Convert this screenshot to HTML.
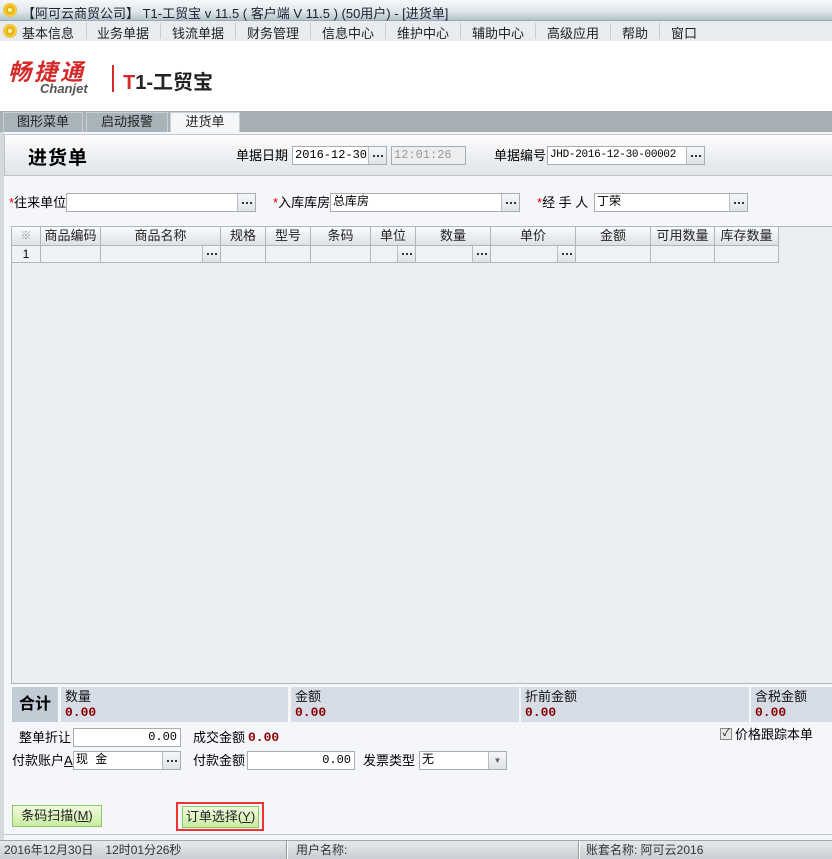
<!DOCTYPE html>
<html><head><meta charset="utf-8">
<style>
*{margin:0;padding:0;box-sizing:border-box}
body{width:832px;height:859px;position:relative;overflow:hidden;background:#f4f6f9;font-family:"Liberation Sans","WenQuanYi Zen Hei","Noto Sans CJK SC",sans-serif;font-size:12px;color:#000}
.a{position:absolute}
.title{left:0;top:0;width:832px;height:21px;background:linear-gradient(#f6f9fa,#dde6ea 60%,#b3c3ca);border-bottom:1px solid #98aab4}
.coin{width:14px;height:14px;border-radius:50%;background:radial-gradient(circle,#fff3a0 20%,#e0a800 25%,#f7d04a 60%,#b88000);}
.menu{left:0;top:21px;width:832px;height:20px;background:#e8ebf0}
.mi{position:absolute;top:2px;font-size:13px;color:#222}
.sep{position:absolute;top:2px;width:1px;height:16px;background:#c8cdd3}
.tabbar{left:0;top:111px;width:832px;height:21px;background:#a8b0b6}
.tab{position:absolute;top:1px;height:20px;background:#a9b3ba;border:1px solid #c8d0d5;border-bottom:none;font-size:13px;color:#222;text-align:center;line-height:18px}
.inp{position:absolute;height:19px;background:#fff;border:1px solid #a8adb3;font-size:12px;line-height:17px;padding-left:2px;font-family:"Liberation Mono","WenQuanYi Zen Hei",monospace;overflow:hidden;white-space:nowrap}
.btn3{position:absolute;width:18px;height:17px;background:linear-gradient(#f5f6f8,#dfe3e8);border-left:1px solid #b8bdc3;display:flex;justify-content:center;align-items:center;gap:2px}
.btn3 b{display:block;width:2px;height:2px;background:#333}
.lbl{position:absolute;font-size:13px;line-height:15px}
.red{color:#e00}
.grid{left:11px;top:226px;width:821px;height:458px;background:#ebeff3;border:1px solid #b0b5ba;border-right:none}
.gh{position:absolute;top:0;height:19px;background:linear-gradient(#fafbfc,#dde1e6);border-right:1px solid #b0b5ba;border-bottom:1px solid #b0b5ba;text-align:center;font-size:13px;line-height:18px;color:#222}
.gc{position:absolute;top:19px;height:17px;background:#eef2f7;border-right:1px solid #b0b5ba;border-bottom:1px solid #b0b5ba}
.gc .btn3{height:16px}
.sum{position:absolute;top:687px;height:35px;background:#d6dde6}
.st{font-size:13px;padding:2px 4px 0;line-height:16px;color:#111}
.sv{font-family:"Liberation Mono",monospace;font-weight:bold;color:#8b0000;font-size:13px;padding-left:4px;line-height:14px;margin-top:1px}
.gbtn{position:absolute;height:22px;background:linear-gradient(#f0fae0,#c8eba0);border:1px solid #8cc760;font-size:13px;line-height:20px;text-align:center;color:#222}
.status{left:0;top:840px;width:832px;height:19px;background:linear-gradient(#e6e9ec,#c9ced3);border-top:1px solid #a0a6ac;font-size:12px;color:#333;line-height:18px}
</style></head><body>
<div class="a title">
 <div class="a coin" style="left:3px;top:3px"></div>
 <div class="a" style="left:22px;top:3px;font-size:13px;color:#223">【阿可云商贸公司】 T1-工贸宝 v 11.5 ( 客户端 V 11.5 )  (50用户) - [进货单]</div>
</div>
<div class="a menu">
 <div class="a coin" style="left:3px;top:3px"></div>
 <span class="mi" style="left:22px">基本信息</span><i class="sep" style="left:86px"></i>
 <span class="mi" style="left:97px">业务单据</span><i class="sep" style="left:160px"></i>
 <span class="mi" style="left:172px">钱流单据</span><i class="sep" style="left:235px"></i>
 <span class="mi" style="left:247px">财务管理</span><i class="sep" style="left:310px"></i>
 <span class="mi" style="left:322px">信息中心</span><i class="sep" style="left:385px"></i>
 <span class="mi" style="left:397px">维护中心</span><i class="sep" style="left:460px"></i>
 <span class="mi" style="left:472px">辅助中心</span><i class="sep" style="left:535px"></i>
 <span class="mi" style="left:547px">高级应用</span><i class="sep" style="left:610px"></i>
 <span class="mi" style="left:622px">帮助</span><i class="sep" style="left:659px"></i>
 <span class="mi" style="left:671px">窗口</span>
</div>
<div class="a" style="left:0;top:41px;width:832px;height:70px;background:#fff">
 <div class="a" style="left:8px;top:19px;font-size:23px;line-height:24px;font-weight:bold;font-style:italic;color:#d42a2a;letter-spacing:3px">畅捷通</div>
 <div class="a" style="left:40px;top:41px;font-size:13px;line-height:14px;font-weight:bold;font-style:italic;color:#555">Chanjet</div>
 <div class="a" style="left:112px;top:24px;width:2px;height:27px;background:#d42a2a"></div>
 <div class="a" style="left:123px;top:25px;font-size:20px;font-weight:bold;color:#222"><span style="color:#d42a2a">T</span>1-工贸宝</div>
</div>
<div class="a tabbar">
 <div class="tab" style="left:3px;width:80px">图形菜单</div>
 <div class="tab" style="left:86px;width:82px">启动报警</div>
 <div class="tab" style="left:170px;width:70px;background:#f4f6f8;color:#222">进货单</div>
</div>
<div class="a" style="left:0;top:132px;width:4px;height:708px;background:#d5d9de"></div>
<div class="a" style="left:4px;top:134px;width:828px;height:42px;background:linear-gradient(#fdfdfe,#dfe4e8);border-top:1px solid #bfc5ca;border-bottom:1px solid #bfc5ca;border-left:1px solid #bfc5ca"></div>
<div class="a" style="left:28px;top:143px;font-size:19px;font-weight:bold;letter-spacing:1px">进货单</div>
<div class="lbl" style="left:236px;top:148px">单据日期</div>
<div class="inp" style="left:292px;top:146px;width:95px">2016-12-30</div>
<div class="btn3" style="left:368px;top:147px"><b></b><b></b><b></b></div>
<div class="inp" style="left:391px;top:146px;width:75px;background:#eceef0;color:#999">12:01:26</div>
<div class="lbl" style="left:494px;top:148px">单据编号</div>
<div class="inp" style="left:547px;top:146px;width:158px;font-size:11px;letter-spacing:-0.3px">JHD-2016-12-30-00002</div>
<div class="btn3" style="left:686px;top:147px"><b></b><b></b><b></b></div>

<div class="lbl" style="left:9px;top:195px"><span class="red">*</span>往来单位</div>
<div class="inp" style="left:66px;top:193px;width:190px"></div>
<div class="btn3" style="left:237px;top:194px"><b></b><b></b><b></b></div>
<div class="lbl" style="left:273px;top:195px"><span class="red">*</span>入库库房</div>
<div class="inp" style="left:330px;top:193px;width:190px">总库房</div>
<div class="btn3" style="left:501px;top:194px"><b></b><b></b><b></b></div>
<div class="lbl" style="left:537px;top:195px"><span class="red">*</span>经 手 人</div>
<div class="inp" style="left:594px;top:193px;width:154px">丁荣</div>
<div class="btn3" style="left:729px;top:194px"><b></b><b></b><b></b></div>

<div class="a grid">
 <div class="gh" style="left:0;width:29px;color:#999;font-size:11px">※</div>
 <div class="gh" style="left:29px;width:60px">商品编码</div>
 <div class="gh" style="left:89px;width:120px">商品名称</div>
 <div class="gh" style="left:209px;width:45px">规格</div>
 <div class="gh" style="left:254px;width:45px">型号</div>
 <div class="gh" style="left:299px;width:60px">条码</div>
 <div class="gh" style="left:359px;width:45px">单位</div>
 <div class="gh" style="left:404px;width:75px">数量</div>
 <div class="gh" style="left:479px;width:85px">单价</div>
 <div class="gh" style="left:564px;width:75px">金额</div>
 <div class="gh" style="left:639px;width:64px">可用数量</div>
 <div class="gh" style="left:703px;width:64px">库存数量</div>
 <div class="gc" style="left:0;width:29px;text-align:center;line-height:16px;font-size:12px">1</div>
 <div class="gc" style="left:29px;width:60px"></div>
 <div class="gc" style="left:89px;width:120px"><div class="btn3" style="right:0;top:0"><b></b><b></b><b></b></div></div>
 <div class="gc" style="left:209px;width:45px"></div>
 <div class="gc" style="left:254px;width:45px"></div>
 <div class="gc" style="left:299px;width:60px"></div>
 <div class="gc" style="left:359px;width:45px"><div class="btn3" style="right:0;top:0"><b></b><b></b><b></b></div></div>
 <div class="gc" style="left:404px;width:75px"><div class="btn3" style="right:0;top:0"><b></b><b></b><b></b></div></div>
 <div class="gc" style="left:479px;width:85px"><div class="btn3" style="right:0;top:0"><b></b><b></b><b></b></div></div>
 <div class="gc" style="left:564px;width:75px"></div>
 <div class="gc" style="left:639px;width:64px"></div>
 <div class="gc" style="left:703px;width:64px"></div>
</div>

<div class="sum" style="left:12px;width:46px;background:#c2ccd6;font-size:16px;font-weight:bold;text-align:center;line-height:35px">合计</div>
<div class="sum" style="left:61px;width:227px"><div class="st">数量</div><div class="sv">0.00</div></div>
<div class="sum" style="left:291px;width:228px"><div class="st">金额</div><div class="sv">0.00</div></div>
<div class="sum" style="left:521px;width:228px"><div class="st">折前金额</div><div class="sv">0.00</div></div>
<div class="sum" style="left:751px;width:81px"><div class="st">含税金额</div><div class="sv">0.00</div></div>

<div class="lbl" style="left:19px;top:730px">整单折让</div>
<div class="inp" style="left:73px;top:728px;width:108px;text-align:right;padding-right:3px">0.00</div>
<div class="lbl" style="left:193px;top:730px">成交金额</div>
<div class="a sv" style="left:248px;top:730px;padding:0">0.00</div>
<div class="a" style="left:720px;top:728px;width:12px;height:12px;border:1px solid #888;background:#e8e8e8;font-size:10px;line-height:10px;text-align:center">✓</div>
<div class="lbl" style="left:735px;top:727px">价格跟踪本单</div>
<div class="lbl" style="left:12px;top:753px">付款账户<u>A</u></div>
<div class="inp" style="left:73px;top:751px;width:108px">现   金</div>
<div class="btn3" style="left:162px;top:752px"><b></b><b></b><b></b></div>
<div class="lbl" style="left:193px;top:753px">付款金额</div>
<div class="inp" style="left:247px;top:751px;width:108px;text-align:right;padding-right:3px">0.00</div>
<div class="lbl" style="left:363px;top:753px">发票类型</div>
<div class="inp" style="left:419px;top:751px;width:88px">无</div>
<div class="btn3" style="left:488px;top:752px;font-size:8px;color:#666">▼</div>

<div class="gbtn" style="left:12px;top:805px;width:90px">条码扫描(<u>M</u>)</div>
<div class="a" style="left:176px;top:802px;width:88px;height:29px;border:2px solid #ee3333"></div>
<div class="gbtn" style="left:182px;top:806px;width:77px">订单选择(<u>Y</u>)</div>
<div class="a" style="left:4px;top:834px;width:828px;height:1px;background:#bfc5ca"></div>

<div class="a status">
 <span class="a" style="left:4px">2016年12月30日　12时01分26秒</span>
 <span class="a" style="left:286px;top:0;width:2px;height:18px;border-left:1px solid #999;border-right:1px solid #fff"></span>
 <span class="a" style="left:296px">用户名称:</span>
 <span class="a" style="left:578px;top:0;width:2px;height:18px;border-left:1px solid #999;border-right:1px solid #fff"></span>
 <span class="a" style="left:586px">账套名称: 阿可云2016</span>
</div>
</body></html>
